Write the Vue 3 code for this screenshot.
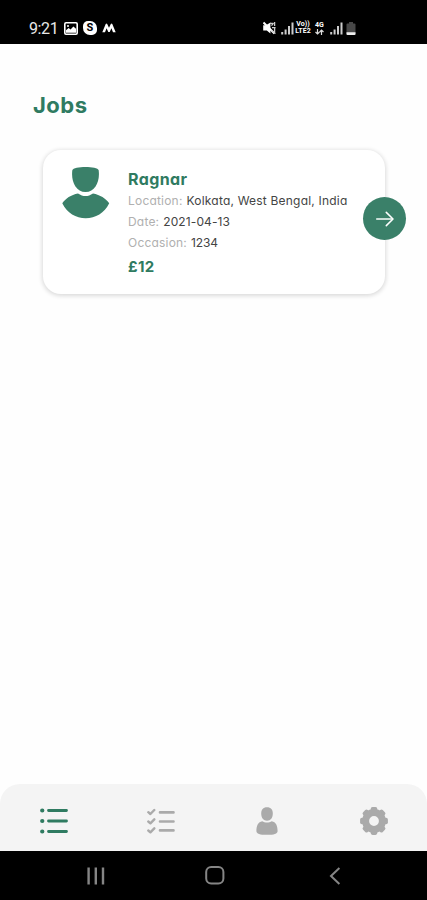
<script setup>
const details = [
  { key: 'location', label: 'Location:', value: 'Kolkata, West Bengal, India' },
  { key: 'date', label: 'Date:', value: '2021-04-13' },
  { key: 'occasion', label: 'Occasion:', value: '1234' },
]
const teeth = [0, 45, 90, 135, 180, 225, 270, 315]
</script>

<template>
  <div class="screen">
    <header class="status">
      <div class="status-left">
        <span class="clock">9:21</span>
        <svg class="photo" width="14" height="13" viewBox="0 0 14 13">
          <rect x="0.8" y="0.8" width="12.4" height="11.4" rx="1.2" fill="#000" stroke="#fff" stroke-width="1.6" />
          <path d="M2 10.8V8.2L4.6 6L6.6 7.4L9.4 4.4L12 6.8V10.8Z" fill="#fff" />
          <circle cx="4" cy="3.9" r="1" fill="#fff" />
        </svg>
        <span class="skype">S</span>
        <svg class="moto" width="14" height="10" viewBox="0 0 14 10">
          <path d="M0.3 9.3L3.7 1Q4.5-.2 5.2 1L7 4.8L8.8 1Q9.5-.2 10.3 1L13.7 9.3H11L9.4 5.2L7.7 9H6.3L4.6 5.2L3 9.3Z" fill="#fff" />
        </svg>
      </div>
      <div class="status-right">
        <svg class="mute" width="13" height="14" viewBox="0 0 13 14">
          <path d="M0.2 4.2H3L7.4 1.5V12.5L3.8 9.5H0.2Z" fill="#fff" />
          <path d="M0.5 1.5L11.5 12.5" stroke="#fff" stroke-width="2" />
          <path d="M7 2.4H9.5M8.5 4.6L10.5 2M9 6.6H12.6M11.6 1V5M11.6 7V12.5M8.5 9.5L12.5 12.5" stroke="#ccc" stroke-width="1.3" fill="none" />
        </svg>
        <svg class="signal" width="13" height="13" viewBox="0 0 13 13">
          <path d="M1.2 10V12.5M4.6 7.5V12.5M8 4V12.5M11.5 0.5V12.5" stroke="#ccc" stroke-width="2" />
        </svg>
        <div class="volte"><span>Vo))</span><span>LTE2</span></div>
        <div class="data">
          <span>4G</span>
          <svg width="9" height="6" viewBox="0 0 9 6">
            <path d="M2.5 0V5M.5 3L2.5 5L4.5 3M6.5 6V1M4.7 3L6.5 1L8.5 3" stroke="#ddd" stroke-width="1.2" fill="none" />
          </svg>
        </div>
        <svg class="signal-b" width="13" height="13" viewBox="0 0 13 13">
          <path d="M1.2 10V12.5M4.6 7.5V12.5M8 4V12.5M11.5 0.5V12.5" stroke="#ccc" stroke-width="2" />
        </svg>
        <svg class="battery" width="10" height="13" viewBox="0 0 10 13">
          <path d="M3 0H7V1.5H8.5Q9.5 1.5 9.5 2.5V12Q9.5 13 8.5 13H1.5Q.5 13 .5 12V2.5Q.5 1.5 1.5 1.5H3Z" fill="#484848" />
          <path d="M.5 10.3H9.5V12Q9.5 13 8.5 13H1.5Q.5 13 .5 12Z" fill="#eee" />
        </svg>
      </div>
    </header>

    <main class="content">
      <h1 class="title">Jobs</h1>
      <article class="card">
        <svg class="avatar" width="48" height="52" viewBox="0 0 48 52">
          <path d="M10.3 3.4C11.5 -1 35.5 -1 36.7 3.4C38 14 33.5 25 23.5 25C13.5 25 9 14 10.3 3.4Z" fill="#3a8069" />
          <path d="M0.3 36.2C3.5 31.5 9 27.6 16 26.4C21 29.8 26 29.8 31 26.4C38 27.6 44 31.5 47.2 36.2C42.5 46 33.5 51.2 23.7 51.2C14 51.2 5 46 0.3 36.2Z" fill="#3a8069" />
        </svg>
        <div class="info">
          <h2 class="name">Ragnar</h2>
          <p v-for="d in details" :key="d.key" class="row" :class="d.key">
            <span class="label">{{ d.label }}</span>
            <span class="value">{{ d.value }}</span>
          </p>
          <p class="price">£12</p>
        </div>
        <button class="go" aria-label="Open job">
          <svg width="18" height="16" viewBox="0 0 18 16" fill="none" stroke-linecap="round" stroke-linejoin="round">
            <path d="M0.8 8H16" stroke="#c8ded6" stroke-width="1.8" />
            <path d="M10.3 1.4L17 8L10.3 14.6" stroke="#fff" stroke-width="1.5" />
          </svg>
        </button>
      </article>
    </main>

    <nav class="tabs">
      <div class="tab">
        <svg width="28" height="26" viewBox="0 0 28 26" stroke="#2f7b61" stroke-linecap="round">
          <path d="M8.5 2.5H26.5M8.5 13H26.5M8.5 23.5H26.5" stroke-width="2.8" />
          <path d="M2.2 2.5H2.3M2.2 13H2.3M2.2 23.5H2.3" stroke-width="4.2" />
        </svg>
      </div>
      <div class="tab">
        <svg width="28" height="26" viewBox="0 0 28 26" stroke="#aaa" fill="none" stroke-linecap="round" stroke-linejoin="round">
          <path d="M13 4.4H26.5M13 13.5H26.5M13 22.4H26.5" stroke-width="2.6" />
          <path d="M1.3 4.2L3.4 6L7.3 2M1.3 13.5L3.4 15.3L7.3 11.3M1.3 22.5L3.4 24.3L7.3 20.3" stroke-width="2.4" />
        </svg>
      </div>
      <div class="tab">
        <svg width="22" height="28" viewBox="0 0 22 28" fill="#aaa">
          <path d="M11 .3C15 .3 16.8 2.8 16.8 6.5C16.8 10.8 14.6 13.7 11 13.7C7.4 13.7 5.2 10.8 5.2 6.5C5.2 2.8 7 .3 11 .3Z" />
          <path d="M6.2 14.3C9 16 13 16 15.8 14.3C19.8 15 21.6 18.5 21.6 24C21.6 27 18 27.8 11 27.8C4 27.8 .4 27 .4 24C.4 18.5 2.2 15 6.2 14.3Z" />
        </svg>
      </div>
      <div class="tab">
        <svg width="28" height="28" viewBox="0 0 28 28">
          <rect v-for="a in teeth" :key="a" x="10.7" y="0.1" width="6.6" height="6" rx="1.8" fill="#aaa" :transform="`rotate(${a} 14 14)`" />
          <circle cx="14" cy="14" r="8.4" fill="none" stroke="#aaa" stroke-width="7" />
        </svg>
      </div>
    </nav>

    <footer class="system">
      <svg class="recents" width="18" height="18" viewBox="0 0 18 18">
        <path d="M1.6 .5V17.5M8.8 .5V17.5M16 .5V17.5" stroke="#858585" stroke-width="2.4" />
      </svg>
      <svg class="home" width="20" height="19" viewBox="0 0 20 19">
        <rect x="1.2" y="1" width="17.2" height="16.6" rx="5" fill="none" stroke="#858585" stroke-width="2" />
      </svg>
      <svg class="back" width="12" height="18" viewBox="0 0 12 18">
        <path d="M10.4 1L2 9L10.4 17" fill="none" stroke="#858585" stroke-width="2" />
      </svg>
    </footer>
  </div>
</template>

<style>
body {
  margin: 0;
  background: #fff;
}
</style>

<style scoped>
.screen {
  width: 427px;
  height: 900px;
  display: flex;
  flex-direction: column;
  overflow: hidden;
  background: #fefefe;
  font-family: Inter, "Liberation Sans", sans-serif;
  font-feature-settings: "cv11" 1;
}
svg {
  display: block;
  flex: none;
}
h1, h2, p {
  margin: 0;
  white-space: nowrap;
}
.status {
  height: 44px;
  box-sizing: border-box;
  padding: 12px 71px 0 29px;
  display: flex;
  justify-content: space-between;
  background: #000;
  color: #fff;
}
.status-left, .status-right {
  height: 32px;
  display: flex;
  align-items: center;
}
.clock {
  width: 35px;
  padding-top: 1px;
  font: 400 16px/32px Roboto, sans-serif;
  letter-spacing: -0.4px;
  color: #e8e8e8;
}
.skype {
  width: 14px;
  height: 14px;
  margin: 0 5px;
  border-radius: 5px 7px 5px 7px;
  background: #fff;
  color: #000;
  font: 700 11px/14px Roboto, sans-serif;
  text-align: center;
}
.signal {
  margin-left: 5px;
}
.volte {
  width: 18px;
  display: flex;
  flex-direction: column;
  align-items: center;
  font: 700 7px/7px Roboto, sans-serif;
}
.data {
  width: 11px;
  margin-left: 2px;
  display: flex;
  flex-direction: column;
  align-items: center;
  gap: 1px;
  font: 700 7px/6px Roboto, sans-serif;
}
.signal-b {
  margin: 0 3px 0 5px;
}
.content {
  flex: 1;
  padding: 47px 42px 0 43px;
}
.title {
  margin-left: -10px;
  color: #2f7b61;
  font-size: 22px;
  line-height: 28px;
  font-weight: 700;
  letter-spacing: 0.5px;
}
.card {
  height: 144px;
  box-sizing: border-box;
  margin-top: 31px;
  padding: 17px 0 0 19px;
  display: flex;
  position: relative;
  border-radius: 18px;
  background: #fff;
  box-shadow: 0 1px 4px 1px rgba(0, 0, 0, 0.14);
}
.info {
  margin-left: 18px;
}
.name {
  height: 23px;
  color: #2f7b61;
  font-size: 16px;
  line-height: 24px;
  font-weight: 700;
  letter-spacing: 0.4px;
}
.row {
  height: 21px;
  display: flex;
  gap: 4px;
  font-size: 12px;
  line-height: 21px;
}
.label {
  color: #b0b0b0;
  letter-spacing: 0.2px;
}
.value {
  color: #444;
  letter-spacing: 0.2px;
}
.date .value {
  letter-spacing: 0.1px;
}
.occasion .value {
  letter-spacing: -0.1px;
}
.price {
  margin-top: 2px;
  color: #2f7b61;
  font-size: 15px;
  line-height: 24px;
  font-weight: 700;
  letter-spacing: 0.3px;
}
.go {
  position: absolute;
  top: 47px;
  right: -21px;
  width: 43px;
  height: 43px;
  padding: 0;
  display: flex;
  align-items: center;
  justify-content: center;
  border: 0;
  border-radius: 50%;
  background: #3a8069;
}
.tabs {
  height: 67px;
  box-sizing: border-box;
  padding: 6px 0 0 1px;
  display: grid;
  grid-template-columns: repeat(4, 1fr);
  border-radius: 20px 20px 0 0;
  background: #f4f4f4;
}
.tab {
  display: flex;
  align-items: center;
  justify-content: center;
}
.system {
  height: 49px;
  display: flex;
  align-items: center;
  background: #000;
}
.recents {
  margin-left: 87px;
}
.home {
  margin-left: 100px;
}
.back {
  margin-left: 104px;
}
</style>
